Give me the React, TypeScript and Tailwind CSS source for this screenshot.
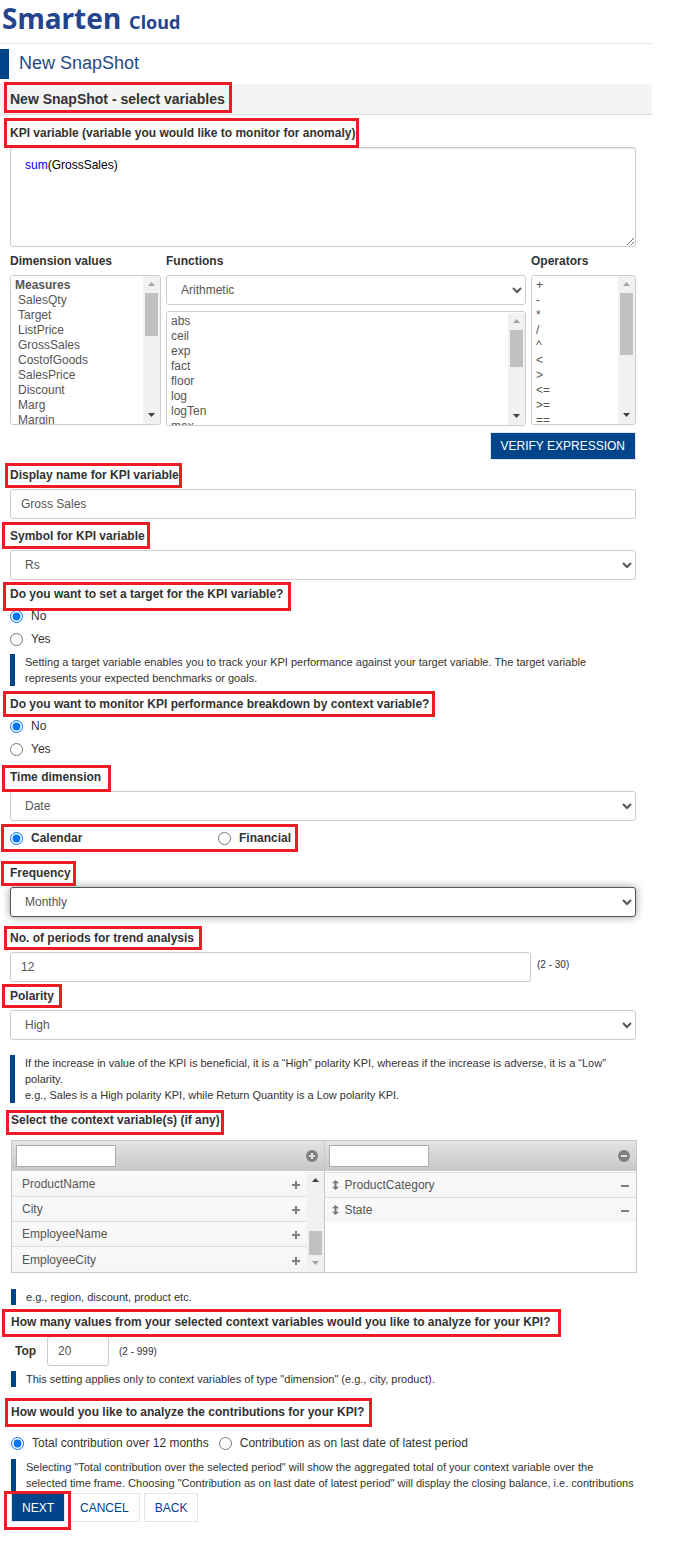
import React, { useState } from 'react';

const measures = ['SalesQty', 'Target', 'ListPrice', 'GrossSales', 'CostofGoods', 'SalesPrice', 'Discount', 'Marg', 'Margin'];
const functionNames = ['abs', 'ceil', 'exp', 'fact', 'floor', 'log', 'logTen', 'max'];
const operators = ['+', '-', '*', '/', '^', '<', '>', '<=', '>=', '=='];
const availableVariables = ['ProductName', 'City', 'EmployeeName', 'EmployeeCity'];
const selectedVariables = ['ProductCategory', 'State'];

const selectClass = 'block h-[30px] w-full rounded-[3px] border border-[#ccc] bg-white px-[10px] text-[12px] text-[#555]';
const inputClass = 'block h-[30px] rounded-[3px] border border-[#ccc] bg-white px-[10px] text-[12px] text-[#555]';
const listClass = 'block h-full min-w-0 flex-1 bg-white pt-px text-[12px] text-[#555] outline-none [scrollbar-width:none]';
const optionClass = 'h-[15px] min-h-0 p-0 px-1 leading-[15px]';

// Red frame drawn around the field it sits in
const Mark: React.FC<{ className: string }> = ({ className }) => (
  <span aria-hidden="true" className={`pointer-events-none absolute z-10 border-[3px] border-[#ed1c24] ${className}`} />
);

interface FieldLabelProps {
  htmlFor?: string;
  id?: string;
  className?: string;
  mark?: string;
  children: React.ReactNode;
}

const FieldLabel: React.FC<FieldLabelProps> = ({ htmlFor, id, className = '', mark, children }) => (
  <div className={`relative mb-[7px] h-4 text-[12px] leading-[18px] font-bold text-[#333] ${className}`}>
    {htmlFor ? <label htmlFor={htmlFor}>{children}</label> : <span id={id}>{children}</span>}
    {mark && <Mark className={mark} />}
  </div>
);

const Note: React.FC<{ className?: string; children: React.ReactNode }> = ({ className = '', children }) => (
  <p className={`border-l-[5px] border-[#004489] pl-[10px] text-[11px] leading-4 text-[#333] ${className}`}>{children}</p>
);

interface RadioProps {
  name: string;
  label: string;
  checked?: boolean;
  className?: string;
}

const Radio: React.FC<RadioProps> = ({ name, label, checked, className = '' }) => (
  <label className={`flex items-center gap-2 text-[12px] leading-4 text-[#333] ${className}`}>
    <input type="radio" name={name} defaultChecked={checked} className="h-[13px] w-[13px]" />
    {label}
  </label>
);

// thumb: height of the handle; atEnd puts it at the bottom and flips which arrow is greyed out
const ScrollBar: React.FC<{ thumb: string; atEnd?: boolean }> = ({ thumb, atEnd }) => (
  <div aria-hidden="true" className="flex w-[17px] shrink-0 flex-col items-center bg-[#f1f1f1]">
    <svg viewBox="0 0 17 17" className="h-[17px] w-[17px]">
      <path d="M5 10L8.5 6L12 10Z" fill={atEnd ? '#404040' : '#a3a3a3'} />
    </svg>
    {atEnd && <div className="flex-1" />}
    <div className={`w-[13px] bg-[#c1c1c1] ${thumb}`} />
    {!atEnd && <div className="flex-1" />}
    <svg viewBox="0 0 17 17" className="h-[17px] w-[17px]">
      <path d="M5 6L12 6L8.5 10Z" fill={atEnd ? '#a3a3a3' : '#404040'} />
    </svg>
  </div>
);

const PlusIcon = () => (
  <svg viewBox="0 0 8 8" className="h-2 w-2" fill="#808080">
    <path d="M3 0h2v3h3v2H5v3H3V5H0V3h3z" />
  </svg>
);

const MinusIcon = () => (
  <svg viewBox="0 0 8 8" className="h-2 w-2" fill="#808080">
    <path d="M0 4h8v2H0z" />
  </svg>
);

const CircleIcon: React.FC<{ minus?: boolean }> = ({ minus }) => (
  <svg viewBox="0 0 12 12" className="h-3 w-3">
    <circle cx="6" cy="6" r="6" fill="#808080" />
    <path d={minus ? 'M3 5h6v2H3z' : 'M5 3h2v2h2v2H7v2H5V7H3V5h2z'} fill="#e0e0e0" />
  </svg>
);

const MoveIcon = () => (
  <svg viewBox="0 0 7 10" className="h-[10px] w-[7px]" fill="#777">
    <path d="M3.5 0L7 3.2H4.5V6.8H7L3.5 10L0 6.8H2.5V3.2H0Z" />
  </svg>
);

const App: React.FC = () => {
  const [expression, setExpression] = useState('sum(GrossSales)');
  const parts = expression.split(/(\bsum\b)/);

  return (
    <main className="mr-[33px] bg-white pb-[18px] font-['Liberation_Sans',Arial,sans-serif] text-[12px] text-[#333]">
      <header className="flex h-[44px] items-baseline gap-2 border-b border-[#e8e8e8] pl-[2px] font-['Noto_Sans',sans-serif] font-bold text-[#24458e]">
        <span className="text-[28px] leading-[36px]">Smarten</span>
        <span className="text-[18px] leading-[36px]">Cloud</span>
      </header>

      <h1 className="mt-[5px] h-[30px] border-l-[9px] border-[#004489] pl-[10px] text-[18px] leading-7 text-[#1f4a86]">New SnapShot</h1>

      <div className="mt-[5px] h-[31px] border-b border-[#ddd] bg-[#f4f4f4] pt-[7px] pl-[10px]">
        <h2 className="relative text-[14px] leading-4 font-bold">
          New SnapShot - select variables
          <Mark className="-top-[9px] -left-[6px] h-[31px] w-[228px]" />
        </h2>
      </div>

      <form className="pr-4 pl-[10px]" onSubmit={(e) => e.preventDefault()}>
        <FieldLabel htmlFor="expression" className="mt-[9px]" mark="-top-[6px] -left-[6px] h-[30px] w-[355px]">
          KPI variable (variable you would like to monitor for anomaly)
        </FieldLabel>
        {/* the coloured expression shows through the transparent text of the textarea */}
        <div className="grid text-[12px] leading-4">
          <pre aria-hidden="true" className="col-start-1 row-start-1 px-[15px] py-[10px] font-[inherit] text-black">
            {parts.map((part, i) => (
              <span key={i} className={part === 'sum' ? 'text-[#00f]' : ''}>{part}</span>
            ))}
          </pre>
          <textarea
            id="expression"
            value={expression}
            onChange={(e) => setExpression(e.target.value)}
            className="col-start-1 row-start-1 block h-[100px] w-full rounded-[3px] border border-[#ccc] bg-transparent px-[14px] py-[9px] text-transparent caret-black shadow-[inset_0_1px_1px_#eee]"
          />
        </div>

        <div className="mt-[5px] flex gap-[5px]">
          <div className="w-[151px]">
            <FieldLabel htmlFor="dimensions">Dimension values</FieldLabel>
            <div className="flex h-[150px] overflow-hidden rounded-[3px] border border-[#ccc]">
              <select id="dimensions" size={10} className={`${listClass} pl-[2px]`}>
                <optgroup label="Measures" className="pt-px text-[12px] leading-[15px] font-bold">
                  {measures.map((name) => (
                    <option key={name} className="h-[15px] min-h-0 py-0 pr-0 pl-[5px]! leading-[15px] font-normal">{name}</option>
                  ))}
                </optgroup>
              </select>
              <ScrollBar thumb="h-[43px]" />
            </div>
          </div>

          <div className="min-w-0 flex-1">
            <FieldLabel htmlFor="category">Functions</FieldLabel>
            <select id="category" className={selectClass}>
              <option>Arithmetic</option>
            </select>
            <div className="mt-[6px] flex h-[115px] overflow-hidden rounded-[3px] border border-[#ccc] pt-px">
              <select size={8} aria-label="Function list" className={listClass}>
                {functionNames.map((name) => (
                  <option key={name} className={optionClass}>{name}</option>
                ))}
              </select>
              <ScrollBar thumb="h-[37px]" />
            </div>
          </div>

          <div className="w-[105px]">
            <FieldLabel htmlFor="operators">Operators</FieldLabel>
            <div className="flex h-[150px] overflow-hidden rounded-[3px] border border-[#ccc]">
              <select id="operators" size={10} className={`${listClass} border-t border-white`}>
                {operators.map((name) => (
                  <option key={name} className={optionClass}>{name}</option>
                ))}
              </select>
              <ScrollBar thumb="h-[62px]" />
            </div>
          </div>
        </div>

        <div className="mt-[6px] flex justify-end">
          <button type="button" className="h-[28px] border border-[#dde5ee] bg-[#004489] px-[10px] text-[12px] text-white">VERIFY EXPRESSION</button>
        </div>

        <FieldLabel htmlFor="displayName" className="mt-[6px]" mark="-top-[3px] -left-[5px] h-[25px] w-[177px]">Display name for KPI variable</FieldLabel>
        <input id="displayName" type="text" defaultValue="Gross Sales" className={`${inputClass} w-full`} />

        <FieldLabel htmlFor="symbol" className="mt-2" mark="-top-[5px] -left-2 h-[27px] w-[148px]">Symbol for KPI variable</FieldLabel>
        <select id="symbol" className={selectClass}>
          <option>Rs</option>
        </select>

        <div role="radiogroup" aria-labelledby="targetLabel">
          <FieldLabel id="targetLabel" className="mt-[5px]" mark="-top-[3px] -left-[7px] h-[29px] w-[288px]">Do you want to set a target for the KPI variable?</FieldLabel>
          <div className="flex flex-col gap-[7px]">
            <Radio name="target" label="No" checked />
            <Radio name="target" label="Yes" />
          </div>
        </div>
        <Note className="mt-[7px]">
          Setting a target variable enables you to track your KPI performance against your target variable. The target variable represents your expected benchmarks or goals.
        </Note>

        <div role="radiogroup" aria-labelledby="breakdownLabel">
          <FieldLabel id="breakdownLabel" className="mt-[9px]" mark="-top-[4px] -left-[7px] h-[26px] w-[432px]">
            Do you want to monitor KPI performance breakdown by context variable?
          </FieldLabel>
          <div className="flex flex-col gap-[7px]">
            <Radio name="breakdown" label="No" checked />
            <Radio name="breakdown" label="Yes" />
          </div>
        </div>

        <FieldLabel htmlFor="timeDimension" className="mt-[11px]" mark="-top-[3px] -left-2 h-[27px] w-[109px]">Time dimension</FieldLabel>
        <select id="timeDimension" className={selectClass}>
          <option>Date</option>
        </select>
        <div role="radiogroup" aria-label="Calendar type" className="relative mt-[9px] flex">
          <Radio name="calendar" label="Calendar" checked className="w-[208px] font-bold" />
          <Radio name="calendar" label="Financial" className="font-bold" />
          <Mark className="-top-[6px] -left-[9px] h-[28px] w-[297px]" />
        </div>

        <FieldLabel htmlFor="frequency" className="mt-[18px]" mark="-top-[3px] -left-[9px] h-[25px] w-[75px]">Frequency</FieldLabel>
        <select id="frequency" className="block h-[30px] w-full rounded-[3px] border border-[#555] bg-white px-[10px] text-[12px] text-[#555] shadow-[0_0_8px_rgba(0,0,0,0.4)]">
          <option>Monthly</option>
        </select>

        <FieldLabel htmlFor="periods" className="mt-3" mark="-top-[3px] -left-[6px] h-[24px] w-[198px]">No. of periods for trend analysis</FieldLabel>
        <div className="flex gap-[6px]">
          <input id="periods" type="text" defaultValue="12" className={`${inputClass} min-w-0 flex-1`} />
          <span className="w-[99px] text-[10px] leading-[26px]">(2 - 30)</span>
        </div>

        <FieldLabel htmlFor="polarity" className="mt-[5px]" mark="-top-[3px] -left-2 h-[24px] w-[60px]">Polarity</FieldLabel>
        <select id="polarity" className={selectClass}>
          <option>High</option>
        </select>
        <Note className="mt-[15px]">
          If the increase in value of the KPI is beneficial, it is a “High” polarity KPI, whereas if the increase is adverse, it is a “Low” polarity.
          <br />
          e.g., Sales is a High polarity KPI, while Return Quantity is a Low polarity KPI.
        </Note>

        <section className="-mr-px ml-px">
          <FieldLabel className="mt-2" mark="-top-px -left-[5px] h-[25px] w-[218px]">Select the context variable(s) (if any)</FieldLabel>
          <div className="mt-[13px] flex h-[133px] border border-[#c8c8c8]">
            <div className="flex min-w-0 flex-1 flex-col border-r border-[#c8c8c8]">
              <div className="flex h-[30px] shrink-0 items-center justify-between bg-linear-to-b from-[#e4e4e4] to-[#c8c8c8] pr-[6px] pl-1">
                <input type="text" aria-label="Search available variables" className="h-[22px] w-[100px] border border-[#aaa] bg-white px-1" />
                <button type="button" aria-label="Add all"><CircleIcon /></button>
              </div>
              <div className="flex flex-1 pt-px">
                <ul className="min-w-0 flex-1">
                  {availableVariables.map((name) => (
                    <li key={name} className="flex h-[25px] items-center justify-between border-b border-[#ddd] bg-linear-to-b from-[#fafafa] to-[#f5f5f5] pr-[7px] pl-[10px] text-[12px] text-[#555] last:border-b-0">
                      {name}
                      <button type="button" aria-label={`Add ${name}`} className="pt-[2px]"><PlusIcon /></button>
                    </li>
                  ))}
                </ul>
                <ScrollBar thumb="h-[24px]" atEnd />
              </div>
            </div>
            <div className="min-w-0 flex-1">
              <div className="flex h-[30px] items-center justify-between bg-linear-to-b from-[#e4e4e4] to-[#c8c8c8] pr-[6px] pl-1">
                <input type="text" aria-label="Search selected variables" className="h-[22px] w-[100px] border border-[#aaa] bg-white px-1" />
                <button type="button" aria-label="Remove all"><CircleIcon minus /></button>
              </div>
              <ul className="pt-px">
                {selectedVariables.map((name) => (
                  <li key={name} className="flex h-[25px] items-center gap-[6px] border-t border-[#ddd] bg-linear-to-b from-[#fafafa] to-[#f5f5f5] pr-[7px] pl-[7px] text-[12px] text-[#555]">
                    <MoveIcon />
                    <span className="flex-1">{name}</span>
                    <button type="button" aria-label={`Remove ${name}`}><MinusIcon /></button>
                  </li>
                ))}
              </ul>
            </div>
          </div>
          <Note className="mt-4">e.g., region, discount, product etc.</Note>

          <FieldLabel className="mt-2" mark="-top-[4px] -left-[9px] h-[28px] w-[559px]">
            How many values from your selected context variables would you like to analyze for your KPI?
          </FieldLabel>
          <div className="flex items-center pl-1">
            <label htmlFor="topValues" className="w-[32px] font-bold">Top</label>
            <input id="topValues" type="text" defaultValue="20" className={`${inputClass} w-[62px]`} />
            <span className="ml-[10px] text-[10px]">(2 - 999)</span>
          </div>
          <Note className="mt-[5px]">This setting applies only to context variables of type "dimension" (e.g., city, product).</Note>

          <div role="radiogroup" aria-labelledby="contributionLabel">
            <FieldLabel id="contributionLabel" className="mt-4" mark="-top-[5px] -left-[6px] h-[29px] w-[367px]">
              How would you like to analyze the contributions for your KPI?
            </FieldLabel>
            <div className="mt-4 flex gap-[10px]">
              <Radio name="contribution" label="Total contribution over 12 months" checked />
              <Radio name="contribution" label="Contribution as on last date of latest period" />
            </div>
          </div>
          <Note className="mt-2">
            Selecting "Total contribution over the selected period" will show the aggregated total of your context variable over the selected time frame. Choosing "Contribution as on last date of latest period" will display the closing balance, i.e. contributions
          </Note>

          <div className="mt-[2px] flex gap-[4px] text-[12px]">
            <div className="relative">
              <button type="submit" className="h-[29px] border border-[#dde5ee] bg-[#004489] px-[10px] text-white">NEXT</button>
              <Mark className="-top-[2px] -left-[7px] h-[39px] w-[67px]" />
            </div>
            <button type="button" className="h-[29px] border border-[#e5e5e5] bg-white px-[10px] text-[#004489]">CANCEL</button>
            <button type="button" className="h-[29px] border border-[#e5e5e5] bg-white px-[10px] text-[#004489]">BACK</button>
          </div>
        </section>
      </form>
    </main>
  );
};

export default App;
